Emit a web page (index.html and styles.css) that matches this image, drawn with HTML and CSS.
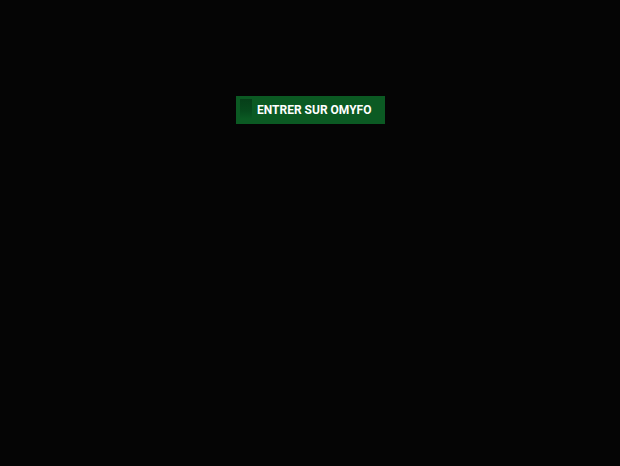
FILE: index.html
```html
<!DOCTYPE html>
<html>
<head>
<meta charset="utf-8">
<link rel="stylesheet" href="styles.css">
</head>
<body>
<div class="page">
  <a class="enter" href="#"><span class="mark"></span><span class="label">ENTRER SUR OMYFO</span></a>
</div>
</body>
</html>
```
FILE: styles.css
```css
html, body {
  margin: 0;
  padding: 0;
  background: #050505;
  height: 100%;
}
.page {
  display: flex;
  justify-content: center;
  padding-top: 96px;
  padding-left: 1px;
}
.enter {
  display: flex;
  align-items: center;
  box-sizing: border-box;
  width: 149px;
  height: 28px;
  background: #0b5a23;
  text-decoration: none;
  padding-left: 4px;
}
.mark {
  width: 12px;
  height: 20px;
  align-self: flex-start;
  margin-top: 3px;
  background: linear-gradient(to bottom, #063f19 0%, #074a1d 60%, #0b5a23 100%);
}
.label {
  margin-left: 5px;
  font-family: Roboto, "Liberation Sans", Arial, sans-serif;
  font-weight: bold;
  font-size: 12px;
  color: #ffffff;
}
```
